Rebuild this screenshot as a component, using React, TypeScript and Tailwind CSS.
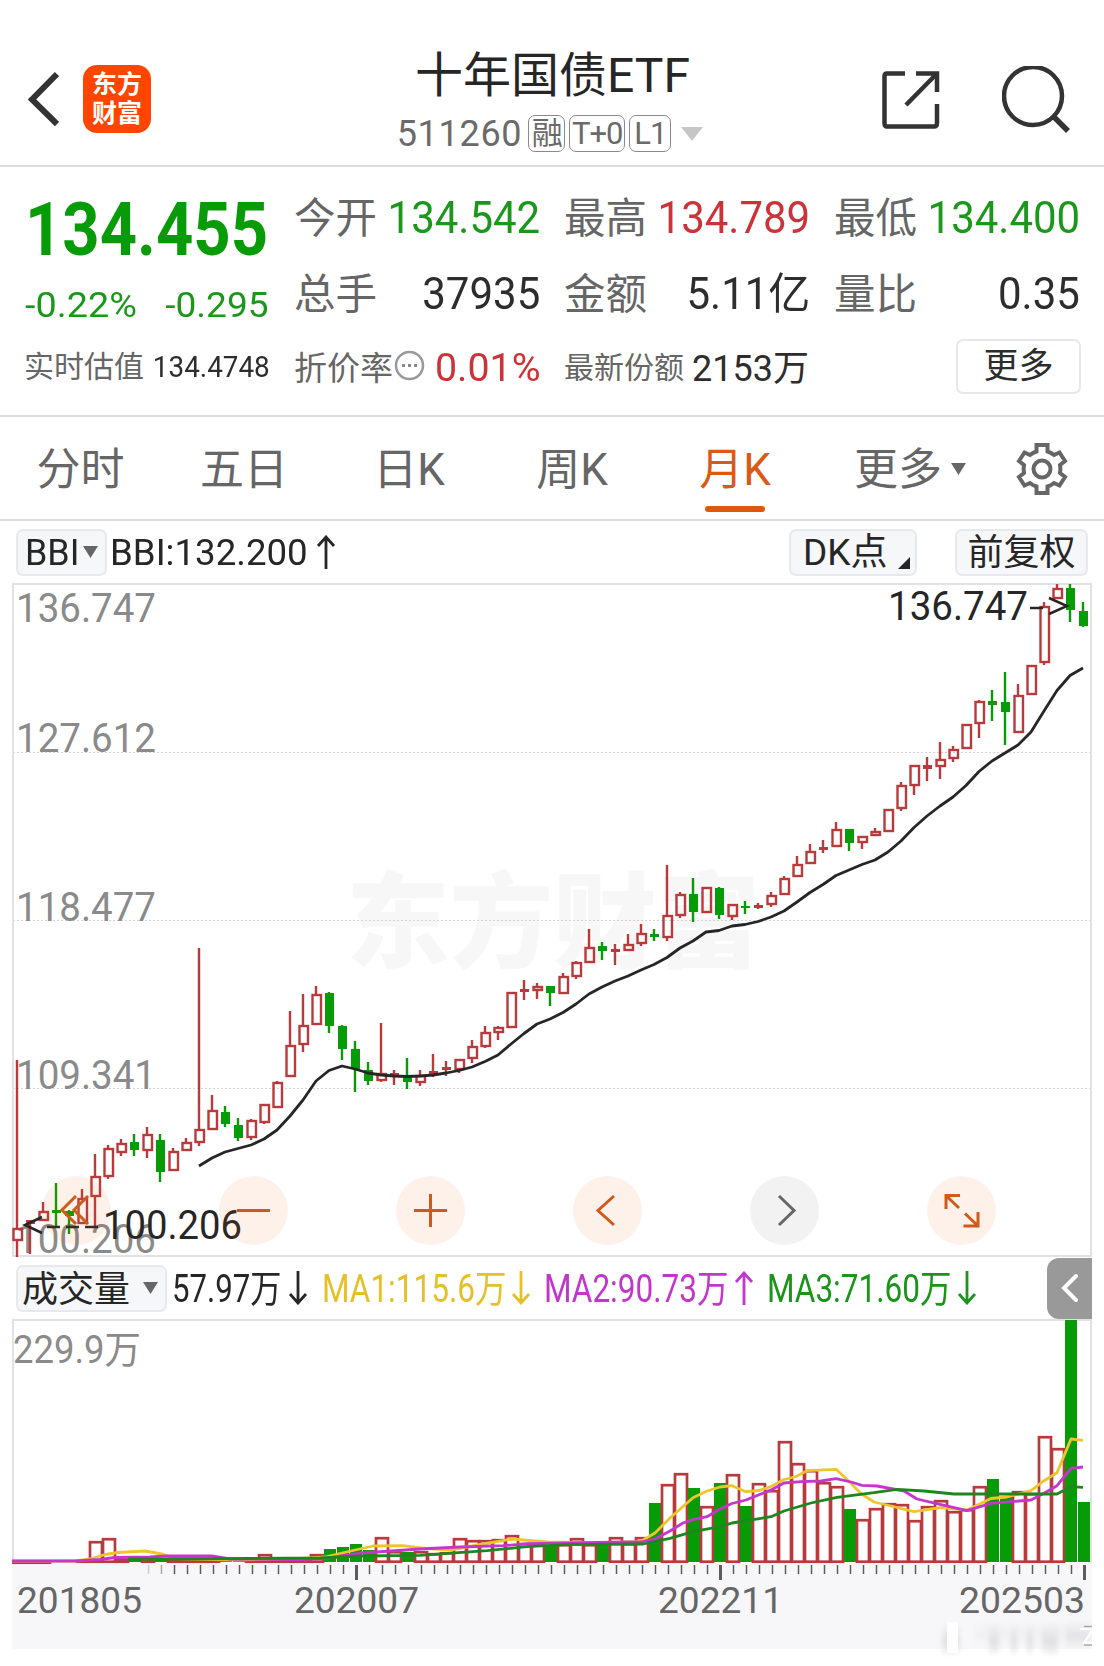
import { ReactNode } from "react";

type Candle = [number, number, number, number, number];

//: [subida, mecha superior, cuerpo superior, cuerpo inferior, mecha inferior]
const candles: Candle[] = [
  [1, 1060, 1228, 1241, 1257], [1, 1220, 1220, 1224, 1254], [1, 1202, 1211, 1221, 1221], [0, 1183, 1210, 1213, 1227],
  [0, 1210, 1211, 1216, 1234], [1, 1189, 1198, 1224, 1224], [1, 1154, 1176, 1197, 1226], [1, 1145, 1148, 1177, 1179],
  [1, 1139, 1143, 1153, 1156], [0, 1134, 1142, 1150, 1156], [1, 1127, 1134, 1151, 1158], [0, 1134, 1140, 1172, 1182],
  [1, 1148, 1151, 1171, 1171], [1, 1138, 1142, 1151, 1151], [1, 948, 1129, 1143, 1146], [1, 1095, 1110, 1130, 1130],
  [0, 1106, 1112, 1124, 1127], [0, 1118, 1125, 1138, 1141], [1, 1119, 1120, 1138, 1140], [1, 1104, 1104, 1123, 1124],
  [1, 1081, 1082, 1108, 1108], [1, 1011, 1045, 1077, 1077], [1, 994, 1025, 1045, 1052], [1, 986, 994, 1025, 1025],
  [0, 992, 993, 1026, 1033], [0, 1025, 1026, 1049, 1060], [0, 1041, 1049, 1069, 1092], [0, 1062, 1070, 1081, 1085],
  [1, 1023, 1073, 1081, 1082], [1, 1070, 1073, 1076, 1085], [0, 1058, 1076, 1082, 1089], [1, 1070, 1075, 1083, 1086],
  [1, 1054, 1071, 1075, 1077], [1, 1061, 1067, 1070, 1076], [1, 1059, 1059, 1070, 1073], [1, 1040, 1046, 1059, 1063],
  [1, 1026, 1032, 1047, 1048], [1, 1026, 1027, 1033, 1040], [1, 992, 992, 1028, 1028], [1, 980, 989, 992, 1000],
  [1, 983, 986, 991, 999], [0, 986, 986, 993, 1006], [1, 973, 976, 994, 994], [1, 961, 962, 977, 979],
  [1, 929, 947, 963, 963], [0, 942, 946, 951, 960], [1, 944, 949, 952, 965], [1, 934, 944, 951, 951],
  [1, 924, 933, 944, 946], [0, 929, 934, 937, 941], [1, 865, 915, 938, 941], [1, 892, 894, 916, 918],
  [0, 878, 894, 912, 922], [1, 887, 887, 913, 913], [0, 887, 888, 915, 919], [1, 904, 904, 917, 920],
  [0, 901, 906, 908, 914], [1, 903, 905, 908, 909], [1, 892, 895, 905, 907], [1, 876, 878, 895, 895],
  [1, 856, 864, 877, 877], [1, 844, 851, 864, 864], [1, 840, 847, 850, 853], [1, 822, 829, 847, 847],
  [0, 829, 829, 843, 851], [1, 836, 836, 843, 849], [1, 828, 831, 836, 836], [1, 809, 809, 832, 832],
  [1, 782, 785, 809, 811], [1, 765, 765, 786, 795], [1, 757, 765, 769, 781], [1, 742, 759, 767, 779],
  [1, 746, 749, 759, 762], [1, 724, 724, 749, 749], [1, 700, 701, 724, 738], [0, 690, 701, 705, 721],
  [0, 672, 702, 712, 745], [1, 684, 695, 733, 733], [1, 665, 665, 695, 695], [1, 602, 606, 663, 665],
  [1, 584, 588, 599, 599], [0, 584, 588, 610, 622], [0, 602, 611, 626, 627],
];

const volumeTops = [
  1561, 1561, 1561, 1561, 1561, 1560, 1541, 1538, 1558, 1558, 1558, 1559, 1560, 1560, 1560, 1560, 1560, 1560, 1559, 1554,
  1558, 1558, 1558, 1554, 1549, 1547, 1544, 1550, 1537, 1551, 1552, 1551, 1553, 1552, 1538, 1540, 1540, 1539, 1535, 1543,
  1544, 1545, 1544, 1538, 1544, 1544, 1537, 1543, 1537, 1503, 1484, 1473, 1488, 1506, 1483, 1474, 1506, 1483, 1490, 1441,
  1463, 1470, 1482, 1486, 1509, 1519, 1508, 1503, 1504, 1520, 1506, 1500, 1511, 1509, 1486, 1479, 1497, 1491, 1493, 1436,
  1448, 1320, 1502,
];

const bbi = [
  1166, 1158, 1152, 1148.5, 1145, 1139, 1130, 1116, 1100, 1081, 1070.5, 1066, 1069, 1073, 1075, 1076, 1076.5, 1076, 1075,
  1073, 1070.5, 1067, 1061.5, 1055, 1044, 1033.5, 1024, 1019, 1012.5, 1004, 994, 987, 981, 976, 970, 964.5, 957.5, 948,
  941, 932, 930.5, 926, 924.5, 921.5, 917, 911, 902, 892.5, 884.5, 875.5, 870, 864.5, 860, 852, 841, 827.5, 816, 806,
  797, 785.5, 771.5, 761, 753, 745, 732, 711, 690.5, 675.5, 668,
];

const ma1 =
  "12,1561 75,1561 90,1559 105,1554.5 118,1552.5 145,1551 162,1554 175,1558.5 235,1560 300,1558.5 325,1557 353,1550.5 373,1546 403,1545.7 427,1548.7 450,1550 483,1544 512,1539 547,1542 593,1542.7 633,1542 643,1540 655,1533 670,1518 693,1497.7 707,1491 720,1487 732,1485.7 746,1491.7 759,1490.5 771,1486.5 784,1479.5 796,1476.5 807,1470.7 836,1469.3 846,1478.5 861,1493.5 874,1502 891,1506 914,1511.7 941,1507.5 967,1510 976,1505.7 991,1498.5 1007,1497 1031,1490.7 1044,1480.7 1057,1472.7 1071,1439 1083,1440.3";
const ma2 =
  "12,1561 75,1561 100,1559.5 115,1557.5 150,1557 165,1556 212,1556 230,1559 300,1559.5 325,1558.5 362,1553 420,1549 460,1547 503,1545.7 527,1543.7 643,1541.7 655,1539 670,1531 683,1523 693,1519.7 707,1516.7 720,1509 732,1503.5 746,1500 771,1490 784,1483 801,1481.7 821,1481 836,1478.7 851,1482 862,1485.3 877,1486 904,1491 917,1499 941,1504.7 967,1510.7 991,1503.3 1031,1500 1044,1493.3 1057,1485.7 1071,1468.3 1083,1467";
const ma3 =
  "128,1559 160,1559 250,1558.5 320,1558 360,1556 420,1555.3 487,1550.7 527,1546.7 567,1544.7 643,1544 670,1538.3 693,1531.7 720,1526.7 732,1523 771,1516.7 784,1511 811,1503 837,1497.3 874,1492.7 897,1489.3 924,1491 954,1494 1057,1494 1071,1486.7 1083,1487.3";

const RED = "#b93a3c";
const GREEN = "#079c07";

const Header = () => {
  return (
    <header className="flex h-[167px] items-start justify-between border-b-2 border-[#dcdcdc] pl-[27px] pr-[34px]">
      <div className="flex w-[308px] items-center gap-[24px] pt-[65px]">
        <svg width="32" height="58" viewBox="0 0 32 58" fill="none">
          <path d="M30 4 5 29.500 30 54" stroke="#333" strokeWidth="6" />
        </svg>
        <div className="flex h-[68px] w-[68px] flex-col items-center justify-center rounded-[14px] bg-[#ff4500] text-[25px] leading-[29px] font-bold text-white">
          <span>东方</span>
          <span>财富</span>
        </div>
      </div>

      <div className="flex flex-col items-center pt-[47px]">
        <h1 className="text-[48px] leading-[58px] font-normal text-[#262626]">十年国债ETF</h1>
        <div className="mt-[10px] mr-[5px] flex h-[37px] items-center gap-[4px] text-[#6a6a6a]">
          <span className="mr-[2px] text-[36px] leading-none tracking-[.7px]">511260</span>
          <Tag className="w-[37px]">融</Tag>
          <Tag className="w-[56px]">T+0</Tag>
          <Tag className="w-[42px]">L1</Tag>
          <svg className="ml-[6px]" width="22" height="14" viewBox="0 0 22 14">
            <path d="M0 0h22L11 14z" fill="#c6c6c6" />
          </svg>
        </div>
      </div>

      <div className="flex w-[300px] justify-end gap-[62px] pt-[66px]">
        <svg className="mt-[4px]" width="59" height="60" viewBox="0 0 59 60" fill="none" stroke="#333" strokeWidth="4.500">
          <path d="M24 3.500H6Q3.500 3.500 3.500 6V53Q3.500 56.500 6 56.500H53Q56 56.500 56 53V34M35 3.500H56V22M55 4.500 25 35" />
        </svg>
        <svg width="68" height="68" viewBox="0 0 68 68" fill="none" stroke="#333" strokeWidth="4.500">
          <circle cx="31" cy="30" r="29" />
          <path d="m51 50 15 15" strokeWidth="5.500" />
        </svg>
      </div>
    </header>
  );
};

const Tag = ({ className, children }: { className: string; children: ReactNode }) => {
  return (
    <span
      className={`flex h-[37px] items-center justify-center rounded-[7px] border-[1.500px] border-[#8a8a8a] text-[31px] leading-none tracking-[-1px] ${className}`}
    >
      {children}
    </span>
  );
};

const Quote = () => {
  return (
    <section className="grid h-[250px] grid-cols-4 gap-x-[26px] border-b-2 border-[#dcdcdc] px-[25px] pt-[12px] whitespace-nowrap text-[#2d2d2d]">
      <div>
        <div className="flex h-[102px] items-center text-[74px] leading-none font-bold text-[#079c07]">
          <span className="origin-left scale-x-[.88]">134.455</span>
        </div>
        <div className="flex h-[48px] items-center justify-between text-[35px] leading-none text-[#1b981b]">
          <span className="origin-left scale-x-[1.08]">-0.22%</span>
          <span className="origin-right scale-x-[1.06]">-0.295</span>
        </div>
        <div className="flex h-[76px] items-center justify-between leading-none">
          <span className="-ml-px text-[30px] text-[#666]">实时估值</span>
          <span className="-mr-px origin-right scale-x-[.96] text-[29px]">134.4748</span>
        </div>
      </div>

      <div>
        <Row label="今开" value="134.542" className="text-[#1b981b]" />
        <Row label="总手" value="37935" />
        <div className="flex h-[74px] items-center justify-between leading-none">
          <span className="-ml-px text-[33px] text-[#666]">折价率</span>
          <svg className="mr-auto ml-px -mt-[6px]" width="31" height="31" viewBox="0 0 31 31" fill="none">
            <circle cx="15.500" cy="15.500" r="13.500" stroke="#999" strokeWidth="2.500" />
            <path d="M8 15.500h3M14 15.500h3M20 15.500h3" stroke="#888" strokeWidth="3" />
          </svg>
          <span className="-mr-[2px] origin-right scale-x-[1.01] pt-px text-[39px] text-[#cc3338]">0.01%</span>
        </div>
      </div>

      <div>
        <Row label="最高" value="134.789" className="text-[#cc3338]" />
        <Row label="金额" value="5.11亿" />
        <div className="flex h-[74px] items-center justify-between leading-none">
          <span className="-ml-px text-[30px] text-[#666]">最新份额</span>
          <span className="pt-px text-[36px]">2153万</span>
        </div>
      </div>

      <div>
        <Row label="最低" value="134.400" className="text-[#1b981b]" />
        <Row label="量比" value="0.35" />
        <div className="-mr-[2px] flex h-[70px] items-center justify-end">
          <button className="flex h-[55px] w-[125px] items-center justify-center rounded-[7px] border-2 border-[#e8e8e8] text-[35px] leading-none">
            更多
          </button>
        </div>
      </div>
    </section>
  );
};

const Row = ({ label, value, className = "" }: { label: string; value: string; className?: string }) => {
  return (
    <div className="flex h-[76px] items-center justify-between pt-[3px] leading-none">
      <span className="-ml-px text-[41.500px] text-[#666]">{label}</span>
      <span className={`-mr-px -ml-[20px] origin-right scale-x-[.965] text-[43.500px] ${className}`}>{value}</span>
    </div>
  );
};

const Tabs = () => {
  return (
    <nav className="flex h-[104px] items-center border-b-2 border-[#dcdcdc] pt-[3px] text-[44px] leading-none whitespace-nowrap text-[#666]">
      <span className="w-[161px] pt-px text-center">分时</span>
      <span className="w-[166px] pt-px text-center">五日</span>
      <span className="w-[164px] pt-px text-center">日K</span>
      <span className="w-[162px] pt-px text-center">周K</span>
      <span className="relative flex h-full w-[164px] items-center justify-center pt-px text-[#da5a15]">
        月K
        <i className="absolute bottom-[7px] left-[52px] h-[6px] w-[60px] rounded-full bg-[#da5a15]" />
      </span>
      <span className="ml-[37px] pt-px">更多</span>
      <svg className="ml-[9px] -mt-px" width="15" height="12" viewBox="0 0 15 12">
        <path d="M0 0h15L7.500 12z" fill="#666" />
      </svg>
      <svg className="ml-[50px] -mt-px" width="52" height="54" viewBox="0 0 52 54" fill="none" stroke="#666" strokeWidth="4">
        <path d="M20.500 3H31.500V9.500Q35 10.500 38 13L43.500 10.500 49 19 44 23Q44.800 27 44 31L49 35 43.500 43.500 38 41Q35 43.500 31.500 44.500V51H20.500V44.500Q17 43.500 14 41L8.500 43.500 3 35 8 31Q7.200 27 8 23L3 19 8.500 10.500 14 13Q17 10.500 20.500 9.500Z" />
        <circle cx="26" cy="27" r="8.500" />
      </svg>
    </nav>
  );
};

const Pill = ({ className, children }: { className: string; children: ReactNode }) => {
  return (
    <div
      className={`flex h-[47px] shrink-0 items-center rounded-[7px] border-2 border-[#e7e9ec] bg-[#f6f7f9] leading-none ${className}`}
    >
      {children}
    </div>
  );
};

const Arrow = ({ down = false }: { down?: boolean }) => {
  return (
    <svg width="20" height="34" viewBox="0 0 20 34" fill="none" stroke="currentColor" strokeWidth="2.800">
      {down ? <path d="M10 0v32M2 23l8 9 8-9" /> : <path d="M10 34V2M2 11l8-9 8 9" />}
    </svg>
  );
};

const Caret = () => {
  return (
    <svg width="15" height="12" viewBox="0 0 15 12">
      <path d="M0 0h15L7.500 12z" fill="#666" />
    </svg>
  );
};

const IndicatorBar = () => {
  return (
    <div className="flex h-[62px] items-center pr-[16px] pl-[16px] text-[37px] leading-none whitespace-nowrap text-[#262626]">
      <Pill className="w-[91px] justify-between pr-[7px] pl-[7px]">
        <span className="w-[54px] origin-left scale-x-[.97]">BBI</span>
        <Caret />
      </Pill>
      <span className="ml-[3px] w-[206px] origin-left scale-x-[.99]">BBI:132.200</span>
      <Arrow />
      <Pill className="ml-auto w-[128px] justify-between pr-[5px] pl-[12px]">
        <span className="w-[84px] pt-px">DK点</span>
        <svg className="mt-[22px]" width="12" height="12" viewBox="0 0 12 12">
          <path d="M12 0v12H0z" fill="#262626" />
        </svg>
      </Pill>
      <Pill className="ml-[38px] w-[133px] justify-center pt-[2px] text-[36px]">前复权</Pill>
    </div>
  );
};

const Candles = () => {
  return (
    <g>
      {candles.map(([up, high, top, bottom, low], i) => {
        const x = 17 + i * 13;
        const color = up ? RED : GREEN;
        return (
          <g key={i} stroke={color} strokeWidth="2.400">
            <path d={`M${x} ${high}V${top}M${x} ${bottom}V${low}`} />
            {up && bottom - top > 4 ? (
              <rect x={x - 3.500} y={top + 1} width="8.500" height={bottom - top - 2} fill="none" />
            ) : (
              <rect x={x - 4} y={top} width="9" height={bottom - top} fill={color} stroke="none" />
            )}
          </g>
        );
      })}
    </g>
  );
};

const axis = "text-[40px] fill-[#8a8a8a]";

const PriceChart = () => {
  return (
    <div className="relative h-[674px] pl-[12px]">
      <svg width="1080" height="674" viewBox="12 583 1080 674" fill="none">
        <text x="346" y="960" textLength="414" lengthAdjust="spacingAndGlyphs" className="fill-[#f7f7f7] text-[104px] font-black">
          东方财富
        </text>
        <path d="M13 752.500H1091M13 920.500H1091M13 1088.500H1091" stroke="#d4d4d4" strokeDasharray="2 2" />
        <rect x="13" y="584" width="1078" height="672" stroke="#e2e2e4" strokeWidth="2" />
        <text x="16" y="622" textLength="140" lengthAdjust="spacingAndGlyphs" className={axis}>136.747</text>
        <text x="16" y="752" textLength="140" lengthAdjust="spacingAndGlyphs" className={axis}>127.612</text>
        <text x="16" y="921" textLength="140" lengthAdjust="spacingAndGlyphs" className={axis}>118.477</text>
        <text x="16" y="1089" textLength="140" lengthAdjust="spacingAndGlyphs" className={axis}>109.341</text>
        <text x="16" y="1253" textLength="140" lengthAdjust="spacingAndGlyphs" className={axis}>100.206</text>
        <Candles />
        <polyline
          points={bbi.map((y, i) => `${199 + i * 13},${y}`).join(" ")}
          stroke="#262626"
          strokeWidth="2.800"
          strokeLinejoin="round"
        />
        <text x="888" y="620" textLength="140" lengthAdjust="spacingAndGlyphs" className="fill-[#262626] text-[40px]">136.747</text>
        <path d="M1030 608h13M1049 598l18 8-18 8" stroke="#262626" strokeWidth="2.500" />
        <text x="103" y="1239" textLength="139" lengthAdjust="spacingAndGlyphs" className="fill-[#262626] text-[40px]">100.206</text>
        <path d="M42 1217l-17 8 17 8M47 1227h13M66 1227h13M85 1227h13" stroke="#262626" strokeWidth="2.500" />
      </svg>

      <div className="absolute top-[593px] left-[42px] flex gap-[108px]">
        <RoundButton>
          <path d="M34 20 20 34l14 14M46 20 32 34l14 14" />
        </RoundButton>
        <RoundButton>
          <path d="M18 34.500h33" />
        </RoundButton>
        <RoundButton>
          <path d="M18 34.500h33M34.500 18v33" />
        </RoundButton>
        <RoundButton>
          <path d="M41 20 25 34.500 41 49" />
        </RoundButton>
        <RoundButton muted>
          <path d="M29 20 44 34.500 29 49" />
        </RoundButton>
        <RoundButton>
          <path d="M19 33V19.500H33M20 20.500 32 32M51 36V50H36.500M50 49 38 37.500" />
        </RoundButton>
      </div>
    </div>
  );
};

const RoundButton = ({ muted = false, children }: { muted?: boolean; children: ReactNode }) => {
  return (
    <button className={`size-[69px] rounded-full ${muted ? "bg-[#0000000d]" : "bg-[#f0641417]"}`}>
      <svg width="69" height="69" viewBox="0 0 69 69" fill="none" stroke={muted ? "#666" : "#cf5a1c"} strokeWidth="3">
        {children}
      </svg>
    </button>
  );
};

const VolumeBar = () => {
  return (
    <div className="flex h-[62px] items-center pl-[16px] text-[38px] leading-none whitespace-nowrap text-[#262626]">
      <Pill className="w-[151px] justify-between pr-[7px] pl-[4px] text-[36px]">
        <span className="pt-[3px]">成交量</span>
        <Caret />
      </Pill>
      <span className="ml-[5px] w-[116px] origin-left scale-x-[.82] pt-px">57.97万</span>
      <Arrow down />
      <div className="ml-[14px] flex items-center text-[#e6c02a]">
        <span className="w-[189px] origin-left scale-x-[.83] pt-px">MA1:115.6万</span>
        <Arrow down />
      </div>
      <div className="ml-[13px] flex items-center text-[#c136cb]">
        <span className="w-[190px] origin-left scale-x-[.83] pt-px">MA2:90.73万</span>
        <Arrow />
      </div>
      <div className="ml-[13px] flex items-center text-[#1b941b]">
        <span className="w-[190px] origin-left scale-x-[.83] pt-px">MA3:71.60万</span>
        <Arrow down />
      </div>
      <button className="mr-[12px] ml-auto flex h-[61px] w-[45px] items-center justify-center rounded-l-[12px] bg-[#999]">
        <svg width="18" height="30" viewBox="0 0 18 30" fill="none" stroke="#fff" strokeWidth="4" strokeLinecap="round">
          <path d="M15 3 3 15l12 12" />
        </svg>
      </button>
    </div>
  );
};

const VolumeChart = () => {
  return (
    <div className="pl-[12px]">
      <svg width="1080" height="347" viewBox="12 1319 1080 347" fill="none">
        <rect x="12" y="1563" width="1080" height="86" fill="#f7f7f9" />
        <path d="M13 1564V1320H1091V1563" stroke="#e2e2e4" strokeWidth="2" />
        <text x="13" y="1363" textLength="128" lengthAdjust="spacingAndGlyphs" className="fill-[#8a8a8a] text-[38px]">229.9万</text>
        {volumeTops.map((top, i) => {
          const x = 17 + i * 13;
          return candles[i][0] ? (
            <rect
              key={i}
              x={x - 5}
              y={top + 1.200}
              width="12"
              height={Math.max(1560.500 - top, 0.5)}
              stroke={RED}
              strokeWidth="2.700"
              fill="#fff"
            />
          ) : (
            <rect key={i} x={x - 5} y={top} width="12" height={1562 - top} fill={GREEN} />
          );
        })}
        <g strokeWidth="2.800" strokeLinejoin="round">
          <polyline points={ma1} stroke="#efc52c" />
          <polyline points={ma2} stroke="#c536cf" />
          <polyline points={ma3} stroke="#1f861f" />
        </g>
        {candles.slice(10).map((_, n) => {
          const i = n + 10;
          const x = 18.5 + i * 13;
          const major = i === 26 || i === 54 || i === 82;
          return (
            <path
              key={i}
              d={`M${x} 1565V${major ? 1580 : 1574}`}
              stroke="#5c5c5c"
              strokeWidth={major ? 3 : 1.5}
              opacity={i === 10 ? 0.25 : i === 11 ? 0.5 : 1}
            />
          );
        })}
        <g className="fill-[#666] text-[37px]">
          <text x="17" y="1613" textLength="125" lengthAdjust="spacingAndGlyphs">201805</text>
          <text x="294" y="1613" textLength="125" lengthAdjust="spacingAndGlyphs">202007</text>
          <text x="658" y="1613" textLength="125" lengthAdjust="spacingAndGlyphs">202211</text>
          <text x="959" y="1613" textLength="126" lengthAdjust="spacingAndGlyphs">202503</text>
        </g>
        <defs>
          <linearGradient id="smudge" x1="0" y1="0" x2="0" y2="1">
            <stop offset="0" stopColor="#e4e4e6" stopOpacity="0" />
            <stop offset=".6" stopColor="#e0e0e2" />
            <stop offset="1" stopColor="#e6e6e6" stopOpacity=".4" />
          </linearGradient>
          <filter id="soft">
            <feGaussianBlur stdDeviation="2" />
          </filter>
        </defs>
        <g fill="url(#smudge)" filter="url(#soft)">
          <rect x="942" y="1622" width="18" height="32" />
          <rect x="989" y="1622" width="10" height="32" />
          <rect x="1011" y="1622" width="6" height="32" />
          <rect x="1027" y="1622" width="6" height="32" />
          <rect x="1042" y="1622" width="16" height="32" />
          <rect x="975" y="1618" width="112" height="26" opacity=".3" />
          <rect x="1066" y="1620" width="24" height="28" opacity=".8" />
        </g>
        <path d="M947 1622h11v31h-11z" fill="#fff" opacity=".9" />
        <path d="M1080 1629h11M1092 1631l-8 12h9" stroke="#fff" strokeWidth="2" />
        <path d="M1084 1626.500h8M1084 1645h8" stroke="#aaa" strokeWidth="1.500" />
      </svg>
    </div>
  );
};

export default function App() {
  return (
    <main className="h-[1666px] w-[1104px] overflow-hidden bg-white font-[Roboto,'Noto_Sans_CJK_SC',sans-serif]">
      <Header />
      <Quote />
      <Tabs />
      <IndicatorBar />
      <PriceChart />
      <VolumeBar />
      <VolumeChart />
    </main>
  );
}
